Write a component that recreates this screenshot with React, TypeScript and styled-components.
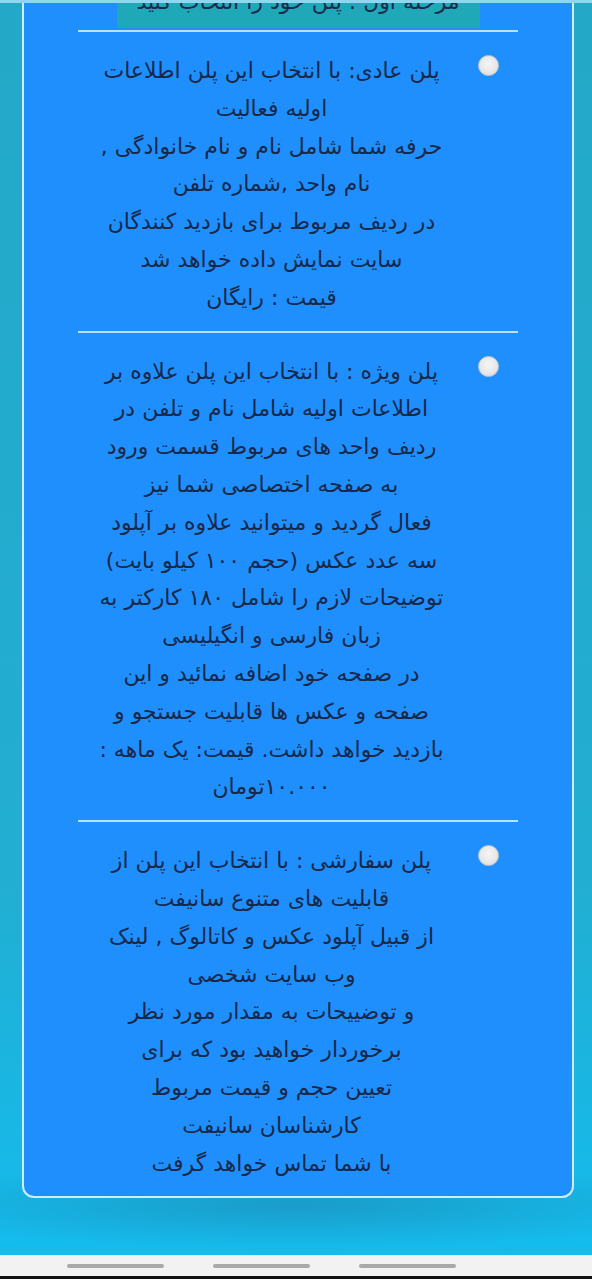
import styled, { createGlobalStyle } from "styled-components";

const GlobalStyle = createGlobalStyle`
  html, body {
    margin: 0;
    padding: 0;
    background: #22a9cc;
  }
  * {
    box-sizing: border-box;
  }
`;

const Screen = styled.div`
  width: 592px;
  height: 1279px;
  display: flex;
  flex-direction: column;
  overflow: hidden;
  font-family: "DejaVu Sans", "Noto Sans", sans-serif;
`;

const Viewport = styled.div`
  position: relative;
  flex: 1;
  overflow: hidden;
  padding: 0 18px 0 22px;
  background:
    radial-gradient(ellipse 70% 44px at 50% 1205px, rgba(30, 120, 160, 0.45), transparent),
    linear-gradient(180deg, #24a8c8 0%, #22aed2 70%, #14bcee 100%);
`;

const TopEdge = styled.div`
  position: absolute;
  left: 0;
  right: 0;
  top: 0;
  height: 3px;
  background: #8fd6ee;
  z-index: 2;
`;

const Panel = styled.div`
  margin-top: -24px;
  background: #1f8ffe;
  border: 2px solid #cfeefc;
  border-top: none;
  border-radius: 0 0 12px 12px;
  direction: rtl;
`;

const Heading = styled.div`
  width: 363px;
  height: 52px;
  margin: 0 auto 2px;
  background: #1fa8b8;
  color: #1a2b4c;
  font-size: 22px;
  line-height: 52px;
  text-align: center;
  white-space: nowrap;
`;

const List = styled.ul`
  list-style: none;
  margin: 0 auto;
  padding: 0;
  width: 440px;
`;

const Item = styled.li`
  display: flex;
  align-items: flex-start;
  gap: 30px;
  padding: 20px 19px 14px 17px;
  border-top: 2px solid #b9e2ff;
`;

const Radio = styled.span`
  flex: none;
  width: 21px;
  height: 21px;
  margin-top: 3px;
  border-radius: 50%;
  background: radial-gradient(circle at 50% 40%, #f6f6f6 0%, #e6e6e6 60%, #d2d2d2 100%);
  border: 1px solid #c8c8d0;
`;

const Text = styled.div`
  flex: 1;
  text-align: center;
  color: #182848;
  font-size: 22px;
  line-height: 37.8px;
`;

const Line = styled.div`
  white-space: nowrap;
`;

const NavBar = styled.div`
  flex: none;
  height: 21px;
  background: #f2f2f2;
  border-top: 1px solid #e6f6fb;
  display: flex;
  align-items: center;
  padding-left: 67px;
  gap: 49px;
`;

const Pill = styled.span`
  width: 97px;
  height: 4px;
  border-radius: 2px;
  background: #a9a9a9;
`;

const BottomEdge = styled.div`
  flex: none;
  height: 3px;
  background: #111;
`;

const plans: string[][] = [
  [
    "پلن عادی: با انتخاب این پلن اطلاعات",
    "اولیه فعالیت",
    "حرفه شما شامل نام و نام خانوادگی ,",
    "نام واحد ,شماره تلفن",
    "در ردیف مربوط برای بازدید کنندگان",
    "سایت نمایش داده خواهد شد",
    "قیمت : رایگان",
  ],
  [
    "پلن ویژه : با انتخاب این پلن علاوه بر",
    "اطلاعات اولیه شامل نام و تلفن در",
    "ردیف واحد های مربوط قسمت ورود",
    "به صفحه اختصاصی شما نیز",
    "فعال گردید و میتوانید علاوه بر آپلود",
    "سه عدد عکس (حجم ۱۰۰ کیلو بایت)",
    "توضیحات لازم را شامل ۱۸۰ کارکتر به",
    "زبان فارسی و انگیلیسی",
    "در صفحه خود اضافه نمائید و این",
    "صفحه و عکس ها قابلیت جستجو و",
    "بازدید خواهد داشت. قیمت: یک ماهه :",
    "۱۰.۰۰۰تومان",
  ],
  [
    "پلن سفارشی : با انتخاب این پلن از",
    "قابلیت های متنوع سانیفت",
    "از قبیل آپلود عکس و کاتالوگ , لینک",
    "وب سایت شخصی",
    "و توضییحات به مقدار مورد نظر",
    "برخوردار خواهید بود که برای",
    "تعیین حجم و قیمت مربوط",
    "کارشناسان سانیفت",
    "با شما تماس خواهد گرفت",
  ],
];

function App() {
  return (
    <>
      <GlobalStyle />
      <Screen>
        <Viewport>
          <TopEdge />
          <Panel>
            <Heading>مرحله اول : پلن خود را انتخاب کنید</Heading>
            <List>
              {plans.map((lines, i) => (
                <Item key={i}>
                  <Radio />
                  <Text>
                    {lines.map((l, j) => (
                      <Line key={j}>{l}</Line>
                    ))}
                  </Text>
                </Item>
              ))}
            </List>
          </Panel>
        </Viewport>
        <NavBar>
          <Pill />
          <Pill />
          <Pill />
        </NavBar>
        <BottomEdge />
      </Screen>
    </>
  );
}

export default App;
